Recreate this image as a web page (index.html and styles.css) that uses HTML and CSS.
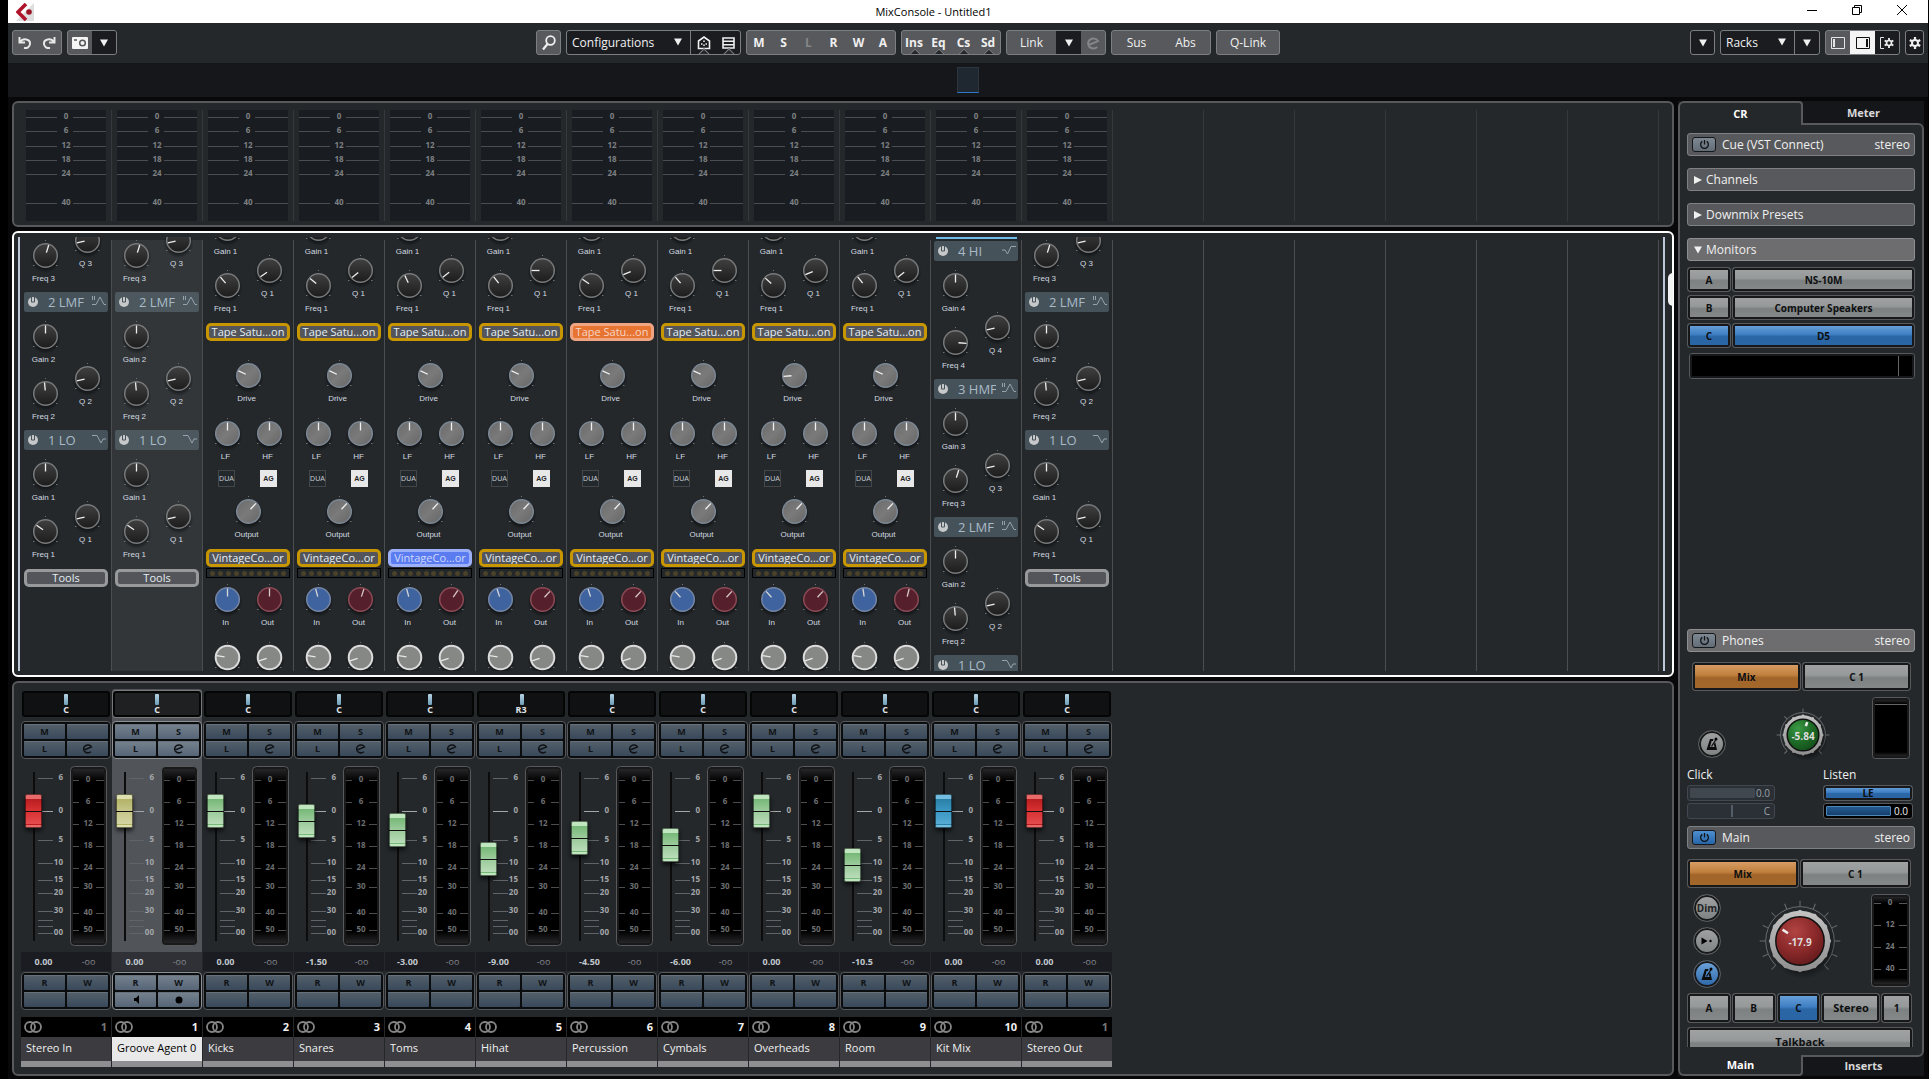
FILE: index.html
```html
<!DOCTYPE html>
<html lang="en">
<head>
<meta charset="utf-8">
<title>MixConsole - Untitled1</title>
<meta name="viewport" content="width=device-width, initial-scale=1">
<link rel="stylesheet" href="styles.css">
</head>
<body>
<svg class="defs" width="0" height="0" aria-hidden="true">
  <defs>
    <linearGradient id="g-dark" x1="0" y1="0" x2="0" y2="1"><stop offset="0" stop-color="#404040"/><stop offset="1" stop-color="#1c1c1c"/></linearGradient>
    <linearGradient id="g-gray" x1="0" y1="0" x2="1" y2="1"><stop offset="0" stop-color="#6a6a6a"/><stop offset="0.5" stop-color="#7a7a7a"/><stop offset="1" stop-color="#666"/></linearGradient>
    <radialGradient id="g-shadow"><stop offset="0.7" stop-color="#000" stop-opacity="0.45"/><stop offset="1" stop-color="#000" stop-opacity="0"/></radialGradient>
    <linearGradient id="g-meter" x1="0" y1="0" x2="0" y2="1"><stop offset="0" stop-color="#262628"/><stop offset="0.07" stop-color="#000"/><stop offset="0.93" stop-color="#000"/><stop offset="1" stop-color="#262628"/></linearGradient>
    <linearGradient id="g-rim" x1="0" y1="0" x2="0" y2="1"><stop offset="0" stop-color="#c4c4c4"/><stop offset="1" stop-color="#8d8d8d"/></linearGradient>
    <radialGradient id="g-green" cx="0.35" cy="0.3" r="0.8"><stop offset="0" stop-color="#3b9a45"/><stop offset="0.5" stop-color="#1f6d28"/><stop offset="1" stop-color="#124a19"/></radialGradient>
    <radialGradient id="g-red" cx="0.4" cy="0.3" r="0.8"><stop offset="0" stop-color="#b04442"/><stop offset="0.5" stop-color="#8d2a2b"/><stop offset="1" stop-color="#5c1719"/></radialGradient>
    <symbol id="i-down" viewBox="0 0 8 8"><path d="M0 0.5h8L4 7.5z" fill="currentColor"/></symbol>
    <symbol id="i-right" viewBox="0 0 8 8"><path d="M0 0v8L8 4z" fill="currentColor"/></symbol>
    <symbol id="i-e" viewBox="0 0 10 10"><path d="M1.4 6.6 8.6 3.6A3.8 3.6 0 1 0 8 7.9" fill="none" stroke="currentColor" stroke-width="1.4"/></symbol>
    <symbol id="i-power" viewBox="0 0 12 12"><path d="M3.6 2.6a4.2 4.2 0 1 0 4.8 0M6 1v5" fill="none" stroke="currentColor" stroke-width="1.4"/></symbol>
    <symbol id="i-on" viewBox="0 0 10 10"><circle cx="5" cy="5" r="5" fill="#c6c8c9"/><path d="M3.500 0v5h3V0" fill="none" stroke="#46525a" stroke-width="1"/></symbol>
    <symbol id="i-bell" viewBox="0 0 14 12"><path d="M0.5 0v4M2.5 0v4" stroke="#93a3ad"/><path d="M0 8.5h4L8 1l4 7.500h2" fill="none" stroke="#93a3ad"/></symbol>
    <symbol id="i-hi" viewBox="0 0 14 12"><path d="M0 5h3l2.500 4L9 1.500h5" fill="none" stroke="#93a3ad"/></symbol>
    <symbol id="i-lo" viewBox="0 0 14 12"><path d="M0 1.500h5L9 9l2-4h3" fill="none" stroke="#93a3ad"/></symbol>
    <symbol id="i-metro" viewBox="0 0 16 16"><path fill-rule="evenodd" d="M6 3h3.500l-.5 2H7.600L6 11h4.500L9.800 8l1.600-1.500L13 14H2.500z" fill="#0c0c0c"/><path d="M7.500 10.500 12 3.500" stroke="#0c0c0c" stroke-width="1.300"/><circle cx="12" cy="3" r="1.500"/></symbol>
    <symbol id="i-gear" viewBox="0 0 12 12"><circle cx="6" cy="6" r="3" fill="none" stroke="currentColor" stroke-width="2"/><path d="M6 0v2.500M6 9.500V12M0.800 3l2.200 1.300M9 7.700 11.200 9M0.800 9 3 7.700M9 4.300 11.200 3" stroke="currentColor" stroke-width="2.200"/></symbol>
    <symbol id="i-stereo" viewBox="0 0 18 12"><circle cx="6" cy="6" r="5" fill="none" stroke="#858585" stroke-width="1.800"/><circle cx="12" cy="6" r="5" fill="none" stroke="#858585" stroke-width="1.800"/></symbol>
  </defs>
</svg>

<header class="titlebar">
  <div class="app-icon"><svg width="18" height="18" viewBox="0 0 18 18"><path d="M0 18 18 0v18z" fill="#dedede"/><path d="M10 1 2 9l8 8" fill="none" stroke="#b0142a" stroke-width="3.600"/><circle cx="13" cy="9" r="2.800" fill="#9c1526"/></svg></div>
  <h1>MixConsole - Untitled1</h1>
  <div class="win-controls">
    <button aria-label="Minimize"><svg width="10" height="10"><path d="M0 5.500h10" stroke="#000"/></svg></button>
    <button aria-label="Restore"><svg width="10" height="10" fill="none" stroke="#000"><path d="M0.500 2.500h7v7h-7zM2.500 2.500v-2h7v7h-2"/></svg></button>
    <button aria-label="Close"><svg width="10" height="10" stroke="#000"><path d="M0 0l10 10M10 0 0 10"/></svg></button>
  </div>
</header>

<nav class="toolbar">
  <div class="tools">
    <div class="group">
      <button aria-label="Undo"><svg width="14" height="14" viewBox="0 0 14 14" fill="none" stroke="#e8e8e8" stroke-width="2"><path d="M1.500 1v5.500H7M2 6.200C5 1.500 12.500 3 12 8c-.3 3-3 4.500-6 4"/></svg></button>
      <button aria-label="Redo"><svg width="14" height="14" viewBox="0 0 14 14" fill="none" stroke="#e8e8e8" stroke-width="2"><path d="M12.500 1v5.500H7M12 6.200C9 1.500 1.500 3 2 8c.3 3 3 4.500 6 4"/></svg></button>
    </div>
    <div class="group">
      <button aria-label="Snapshot"><svg width="16" height="12" viewBox="0 0 16 12"><rect width="16" height="12" rx="1" fill="#f4f4f4"/><circle cx="10.500" cy="6" r="2.800" fill="none" stroke="#58595c" stroke-width="1.500"/><path d="M2 3h3" stroke="#58595c" stroke-width="1.500"/></svg></button>
      <button class="dark" aria-label="Snapshot menu"><svg class="arrow"><use href="#i-down"/></svg></button>
    </div>
  </div>

  <div class="tools tools-mid">
    <div class="group"><button aria-label="Find"><svg width="14" height="16" viewBox="0 0 14 16" fill="none" stroke="#f0f0f0"><circle cx="8.500" cy="5.500" r="4.300" stroke-width="1.800"/><path d="M5.500 9 1 14.500" stroke-width="2.200"/></svg></button></div>
    <div class="group dark">
      <span class="picker picker-config"><select aria-label="Configurations"><option>Configurations</option></select><svg class="arrow"><use href="#i-down"/></svg></span>
      <button class="notch" aria-label="Zones"><svg width="14" height="14" viewBox="0 0 14 14" fill="none" stroke="#f0f0f0" stroke-width="1.600"><path d="M1.500 5 7 1l5.500 4v7.500h-11z"/><path d="M7 4.500v1.500M7 8.500V10M4 8h1.500M8.500 8H10"/></svg></button>
      <button class="notch" aria-label="Racks list"><svg width="13" height="12" viewBox="0 0 13 12" fill="none" stroke="#f0f0f0" stroke-width="1.600"><path d="M1 1h11v10H1zM1 4.300h11M1 7.700h11"/></svg></button>
    </div>
    <div class="group bold">
      <button>M</button><button>S</button><button class="off">L</button><button>R</button><button>W</button><button>A</button>
    </div>
    <div class="group bold">
      <button class="notch">Ins</button><button class="notch">Eq</button><button class="notch">Cs</button><button class="notch">Sd</button>
    </div>
    <div class="group">
      <button class="wide">Link</button><button class="dark" aria-label="Link options"><svg class="arrow"><use href="#i-down"/></svg></button><button class="off" aria-label="Edit link"><svg width="14" height="14"><use href="#i-e"/></svg></button>
    </div>
    <div class="group"><button class="wide">Sus</button><button class="wide">Abs</button></div>
    <div class="group"><button class="qlink">Q-Link</button></div>
  </div>

  <div class="tools">
    <div class="group dark"><button aria-label="Zoom menu"><svg class="arrow"><use href="#i-down"/></svg></button></div>
    <div class="group dark">
      <span class="picker picker-racks"><select aria-label="Racks"><option>Racks</option></select><svg class="arrow"><use href="#i-down"/></svg></span>
      <button aria-label="Rack presets"><svg class="arrow"><use href="#i-down"/></svg></button>
    </div>
    <div class="group">
      <button aria-label="Left zone"><svg width="14" height="12" viewBox="0 0 14 12"><path d="M0.500 0.500h13v11H0.500z" fill="none" stroke="#e4e4e4"/><path d="M3 2v8" stroke="#e4e4e4" stroke-width="2"/></svg></button>
      <button class="lit" aria-label="Right zone"><svg width="14" height="12" viewBox="0 0 14 12"><path d="M0.500 0.500h13v11H0.500z" fill="none" stroke="#111"/><path d="M11 2v8" stroke="#111" stroke-width="2"/></svg></button>
      <button class="dark" aria-label="Window layout"><svg width="14" height="12" viewBox="0 0 14 12"><path d="M4 0.500H0.500v11H4" fill="none" stroke="#e4e4e4"/><svg x="4" y="1" width="10" height="10"><use href="#i-gear"/></svg></svg></button>
    </div>
    <div class="group dark"><button class="narrow" aria-label="Settings"><svg width="12" height="12"><use href="#i-gear"/></svg></button></div>
  </div>
</nav>

<div class="overview"><span class="overview-range"></span></div>

<main class="workspace">
  <div class="console">
    <section class="panel meters" id="meters" aria-label="Meter bridge"></section>
    <section class="panel rack" aria-label="Channel racks">
      <div class="rack-view" id="rack"></div>
      <span class="rack-handle"></span>
    </section>
    <section class="panel faders" id="faders" aria-label="Faders"></section>
  </div>

  <aside class="control-room">
    <div class="tabs tabs-top"><button class="tab active">CR</button><button class="tab">Meter</button></div>
    <div class="cr-body">
      <div class="bar"><button class="power" aria-label="Cue power"><svg width="11" height="11"><use href="#i-power"/></svg></button>Cue (VST Connect)<span class="mode">stereo</span></div>
      <button class="bar"><svg class="mark"><use href="#i-right"/></svg>Channels</button>
      <button class="bar"><svg class="mark"><use href="#i-right"/></svg>Downmix Presets</button>
      <button class="bar light"><svg class="mark"><use href="#i-down"/></svg>Monitors</button>
      <div class="monitors">
        <button class="key">A</button><button class="key name">NS-10M</button>
        <button class="key">B</button><button class="key name">Computer Speakers</button>
        <button class="key blue">C</button><button class="key name blue">D5</button>
      </div>
      <input class="gain" type="range" min="0" max="100" value="94" aria-label="Monitor gain">

      <div class="cr-lower">
        <div class="bar light"><button class="power" aria-label="Phones power"><svg width="11" height="11"><use href="#i-power"/></svg></button>Phones<span class="mode">stereo</span></div>
        <div class="source inset"><button class="key orange">Mix</button><button class="key">C 1</button></div>
        <div class="phones">
          <button class="round low" aria-label="Phones click"><svg width="16" height="16"><use href="#i-metro"/></svg></button>
          <svg class="dial" width="60" height="60" viewBox="-30 -30 60 60" id="phones-dial" role="img" aria-label="Phones level"></svg>
          <svg width="38" height="62" role="img" aria-label="Phones meter"><rect x="0.500" y="0.500" width="37" height="61" rx="3" fill="#191919" stroke="#57595c"/><rect x="3" y="3" width="32" height="56" fill="url(#g-meter)"/><path d="M3 7.500h32" stroke="#666"/></svg>
        </div>
        <div class="sends">
          <div class="send">
            <span>Click</span>
            <label class="slot-slider dim"><input type="range" value="76" aria-label="Click level"><output>0.0</output></label>
            <label class="slot-slider dim pan"><input type="range" value="50" aria-label="Click pan"><output>C</output></label>
          </div>
          <div class="send">
            <span>Listen</span>
            <button class="key blue">LE</button>
            <label class="slot-slider"><input type="range" value="76" aria-label="Listen level"><output>0.0</output></label>
          </div>
        </div>
        <div class="bar"><button class="power on" aria-label="Main power"><svg width="11" height="11"><use href="#i-power"/></svg></button>Main<span class="mode">stereo</span></div>
        <div class="source"><button class="key orange">Mix</button><button class="key">C 1</button></div>
        <div class="main-out">
          <div class="rounds">
            <button class="round">Dim</button>
            <button class="round" aria-label="Reference level"><svg width="12" height="8"><path d="M0.500 0.500v7L6.500 4z"/><circle cx="9.500" cy="4" r="1.200"/></svg></button>
            <button class="round blue" aria-label="Main click"><svg width="16" height="16"><use href="#i-metro"/></svg></button>
          </div>
          <svg class="dial" width="90" height="90" viewBox="-45 -45 90 90" id="main-dial" role="img" aria-label="Main level"></svg>
          <svg width="39" height="93" class="scale" id="main-meter" role="img" aria-label="Main meter"></svg>
        </div>
        <div class="select-row"><button class="key">A</button><button class="key">B</button><button class="key blue">C</button><button class="key stereo">Stereo</button><button class="key one">1</button></div>
        <div class="talk"><button class="key big">Talkback</button></div>
      </div>
    </div>
    <div class="tabs tabs-bottom"><button class="tab active">Main</button><button class="tab">Inserts</button></div>
  </aside>
</main>
<script src="app.js"></script>
</body>
</html>
```
FILE: styles.css
```css
* { box-sizing: border-box; }

body {
  margin: 0;
  height: 100vh;
  padding: 0 1px 0 8px;
  display: flex;
  flex-direction: column;
  overflow: hidden;
  background: #000;
  color: #f0f0f0;
  font: 12px/16px "Open Sans", "Noto Sans", sans-serif;
}

button, select, input { font: inherit; color: inherit; margin: 0; }
button { padding: 0; border: 0; background: none; display: flex; align-items: center; justify-content: center; white-space: nowrap; }
svg { display: block; flex: none; }
.defs { position: absolute; }

/* Title bar */
.titlebar { height: 23px; display: flex; align-items: center; background: #fff; color: #000; flex: none; }
.app-icon { width: 70px; padding-left: 8px; }
.titlebar h1 { flex: 1; margin: 0; font-size: 11px; font-weight: 400; text-align: center; }
.win-controls { display: flex; padding-right: 4px; }
.win-controls button { width: 45px; height: 23px; padding-bottom: 3px; }

/* Toolbar */
.toolbar { height: 40px; flex: none; display: flex; justify-content: space-between; align-items: center; padding: 0 4px 1px; background: #24282b; }
.tools { display: flex; gap: 5px; }
.tools-mid { margin-left: 9px; }
.group { display: flex; height: 25px; border: 1px solid #7c7e81; border-radius: 3px; background: #58595c; overflow: hidden; }
.group button { width: 25px; height: 23px; position: relative; }
.group button:first-child, .group button:last-child { width: 24px; }
.group button:only-child { width: 23px; }
.group .dark, .group.dark { background: #1b1c20; }
.group .lit { background: #f4f4f4; }
.group .off { color: #85868a; }
.group .wide { width: 50px; }
.group .wide:first-child, .group .wide:last-child { width: 49px; }
.group .qlink.qlink { width: 62px; }
.group .narrow.narrow { width: 17px; }
.group.bold { font-weight: 700; }
.notch::after { content: ""; position: absolute; left: 9px; bottom: -4px; width: 6px; height: 6px; background: #24282b; border: 1px solid #7c7e81; rotate: 45deg; }
.arrow { width: 8px; height: 8px; }
.picker { position: relative; display: flex; border-right: 1px solid #7c7e81; }
.picker select { width: 100%; border: 0; padding: 0 5px; background: none; appearance: none; }
.picker .arrow { position: absolute; right: 8px; top: 7px; pointer-events: none; }
.picker-config { width: 124px; }
.picker-racks { width: 74px; }

.overview { height: 34px; flex: none; display: flex; justify-content: center; padding: 4px 0; background: #15171b; }
.overview-range { width: 22px; background: #1f2730; border: 1px solid #2b3640; border-bottom-color: #2f78c4; }

/* Workspace */
.workspace { flex: 1; min-height: 0; display: flex; gap: 4px; padding: 4px 4px 3px; background: #08080a; }
.console { flex: 1; min-width: 0; display: flex; flex-direction: column; gap: 4px; }
.panel { display: flex; border: 2px solid #57595c; border-radius: 6px; background: #24282b; overflow: hidden; }
.col { width: 91px; flex: none; }

.meters { height: 126px; flex: none; padding: 7px 7px 4px; }
.meters .col { border-right: 1px solid #35393c; padding-left: 5px; }
.scale { font: 700 8px/10px "Open Sans", sans-serif; text-anchor: middle; }

/* Racks */
.rack { flex: 1; min-height: 0; position: relative; border-color: #fff; overflow: visible; }
.rack-view { flex: 1; min-width: 0; display: flex; margin: 4px 7px 4px 4px; padding-left: 1px; border: solid #bcc8da; border-width: 0 2px; overflow: hidden; }
.rack-handle { position: absolute; right: -1px; top: 40px; width: 5px; height: 33px; border-radius: 5px 0 0 5px; background: #f2f2f2; }
.rack .col { padding: 0 3px; background: linear-gradient(#4b4e51, #4b4e51) right 3px / 1px 100% no-repeat; }
.rack .col.selected { background: linear-gradient(to right, #323639 90px, #4b4e51 90px) 0 3px no-repeat; }
.from-band3 .stack { margin-top: -83px; }
.from-band1 .stack { margin-top: -53px; }
.stack { width: 84px; }
.accent { height: 2px; margin: 0 2px 2px; background: #6fbbe8; }

.band-head { display: flex; align-items: center; width: 84px; height: 20px; padding: 0 2px 0 4px; border-radius: 2px; background: #46525a; color: #a9bac6; font-size: 13px; }
.selected .band-head { background: #4c585e; }
.band-head span { width: 38px; margin-left: 10px; margin-right: auto; text-align: left; overflow: hidden; }
.band { display: grid; grid-template-columns: 42px 42px; padding-top: 4px; }
.band-q { padding-top: 42px; }
.unit { height: 57px; width: 42px; font: 8px/12px "Liberation Sans", Arial, sans-serif; color: #d3dae0; text-align: center; }
.unit span { display: block; padding-right: 3px; white-space: nowrap; }
.row { display: flex; justify-content: center; }
.slot { width: 84px; height: 18px; margin-top: 1px; border: 3px solid #c89600; border-radius: 5px; background: #53555b; color: #e4edf3; font-size: 11px; overflow: hidden; }
.slot.tools-slot { border-color: #97999b; }
.slot.hot { border-color: #f0a582; background: #e87432; color: #f6d5c5; }
.slot.cool { border-color: #9cb0fa; background: #5b7cf0; color: #cfdafc; }
.drive { margin-top: 14px; margin-bottom: 1px; }
.switches { height: 21px; display: flex; }
.switches button { width: 17px; height: 17px; margin: 0 13px 0 12px; border: 1px solid #44474a; background: #23282c; color: #c3cbd2; font: 7px/8px "Liberation Sans", Arial, sans-serif; }
.switches button + button { background: #e8e8e8; border-color: #e8e8e8; color: #222; font-weight: 700; }
.leds { display: flex; align-items: center; justify-content: space-around; width: 84px; height: 10px; margin: 1px 0; padding: 0 2px; border: 1px solid #000; }
.leds i { width: 5px; height: 5px; border-radius: 50%; background: #494129; }
.in-out { margin-bottom: 1px; }

/* Faders */
.faders { flex: none; height: 395px; padding: 6px 7px; }
.strip { width: 90px; margin-right: 1px; flex: none; display: flex; flex-direction: column; }
.strip-top { padding-top: 2px; border-radius: 3px 3px 0 0; height: 263px; }
.selected .strip-top { background: #515459; }
.pan-box { width: 88px; height: 26px; margin: 0 1px 4px; border: 2px solid #040505; border-radius: 3px; background: #0f1112; font: 700 9px/10px "Open Sans", sans-serif; text-align: center; }
.selected .pan-box { background: #1e2022; box-shadow: 0 0 0 1px #76787c; }
.pan-box input { display: block; width: 100%; height: 12px; appearance: none; background: none; }
.pan-box input::-webkit-slider-thumb { appearance: none; width: 4px; height: 11px; border-radius: 1px; background: linear-gradient(#b7d3e3, #6c9db8); }
.pan-box output { display: block; color: #e0e4e6; }

.pads { display: grid; grid-template: 1fr 1fr / 1fr 1fr; gap: 2px; height: 38px; padding: 2px; border: 1px solid #57595c; border-radius: 4px; background: #0b0c0e; }
.pads button { min-height: 0; border-radius: 1px; background: linear-gradient(#54606b, #39495a); box-shadow: inset 0 1px #66717b; color: #101316; font: 700 9px/12px "Open Sans", sans-serif; }
.selected .pads { border-color: #8d9094; }
.selected .pads button { background: linear-gradient(#76828e, #566577); }
.pads.auto { margin-top: 1px; }

.fader-area { display: flex; padding-top: 7px; }
.fader { width: 17px; height: 169px; margin: 6px 0 0 4px; writing-mode: vertical-lr; direction: rtl; appearance: none; position: relative; background: linear-gradient(#0c0c0d, #0c0c0d) center / 2px 100% no-repeat; }
.fader::-webkit-slider-thumb { appearance: none; width: 17px; height: 34px; border: 1px solid #0008; border-radius: 2px; box-shadow: 0 3px 4px #000a;
  background: linear-gradient(var(--edge) 4px, var(--deep) 4px, var(--mid) 16px, #111 16px, #111 17px, var(--mid) 17px, var(--low) 29px, var(--deep) 29px, var(--deep) 30px, var(--edge) 30px); }
.red { --edge: #e86a6a; --deep: #b81d1f; --mid: #d93234; --low: #e34c4e; }
.sand { --edge: #dedfae; --deep: #b2b267; --mid: #c6c68a; --low: #d4d4a4; }
.green { --edge: #c0e6bf; --deep: #76b877; --mid: #9ccb9c; --low: #b9dcb8; }
.azure { --edge: #73bde0; --deep: #2a7fa5; --mid: #3b98c5; --low: #56abd2; }
.fader-scale { margin: 6px 0 0 -4px; text-anchor: end; }
.strip-meter { margin-left: 5px; }

.levels { display: grid; grid-template-columns: 1fr 1fr; height: 19px; padding-top: 2px; background: #1b1c21; font-size: 9px; font-weight: 700; color: #c0c8ce; text-align: center; }
.levels span { color: #83878c; font-weight: 400; }
.selected .levels { background: #2f3136; }
.ident { display: flex; justify-content: space-between; align-items: center; height: 20px; margin-top: 7px; padding: 0 4px 0 3px; background: #000; font-size: 11px; font-weight: 700; }
.ident.io { color: #777; }
.title { height: 30px; padding: 3px 5px; border-bottom: 6px solid #8f8f91; background: #3c3c40; font-size: 11px; white-space: nowrap; overflow: hidden; }
.title span { display: block; overflow: hidden; }
.selected .title { background: #e9e9e9; color: #000; }

/* Control room */
.control-room { width: 246px; flex: none; display: flex; flex-direction: column; background: #15161a; }
.tabs { display: flex; position: relative; }
.tab { flex: 1; font-size: 11px; font-weight: 700; border: 2px solid transparent; color: #d8d8d8; }
.tab.active { flex: 0 0 125px; border-color: #57595c; background: #24282b; color: #fff; }
.tabs-top { height: 24px; margin-bottom: -2px; z-index: 1; }
.tabs-top .active { border-bottom: 0; border-radius: 6px 4px 0 0; }
.tabs-bottom { height: 21px; margin-top: -2px; }
.tabs-bottom .active { border-top: 0; border-radius: 0 0 4px 6px; }
.cr-body { flex: 1; min-height: 0; display: flex; flex-direction: column; padding: 8px 7px; border: 2px solid #57595c; border-radius: 0 6px 6px 0; background: #24282b; }
.bar { display: flex; flex: none; align-items: center; justify-content: flex-start; width: 100%; height: 23px; margin-bottom: 12px; padding: 0 4px; border: 1px solid #7e8083; border-radius: 3px; background: #58595c; }
.bar.light { background: #6d6d6f; border-color: #8e8f91; }
.mode { margin-left: auto; }
.mark { width: 8px; height: 8px; margin: 0 4px 0 2px; }
.power { width: 24px; height: 15px; margin-right: 6px; border: 1px solid #15181b; border-radius: 3px; background: linear-gradient(#7e8892, #626d78); color: #101214; }
.power.on { background: linear-gradient(#4d8fd0, #2765a8); }
.key { flex: 1; min-width: 0; height: 25px; border: 1px solid #57595c; border-radius: 3px; background: linear-gradient(#a1a3a4, #96999a 45%, #7d8182 55%, #868a8b); box-shadow: inset 0 0 0 2px #17181a; color: #0d0f10; font-size: 10px; font-weight: 700; }
.key.blue { background: linear-gradient(#6fa5dc, #3f80c4 45%, #2a65a6 55%, #2a65a6); }
.key.orange { background: linear-gradient(#dba26c, #c07f3d 45%, #a1652a 55%, #a5682b); }
.monitors { display: grid; grid-template-columns: 44px 1fr; gap: 3px 1px; margin: -6px 0 5px; }
.gain { display: block; width: 226px; height: 26px; flex: none; margin-left: 2px; padding: 0 2px; appearance: none; border: 1px solid #57595c; border-radius: 3px; background: #000; box-shadow: inset 0 0 0 2px #17181a; }
.gain::-webkit-slider-thumb { appearance: none; width: 1px; height: 20px; background: #666; }

.cr-lower { margin-top: auto; height: 418px; flex: none; display: flex; flex-direction: column; overflow: hidden; }
.cr-lower > * { flex: none; }
.cr-lower .bar { margin-bottom: 10px; }
.source { display: flex; gap: 1px; width: 224px; }
.source.inset { padding-left: 5px; }
.source .key { height: 29px; }
.phones { display: flex; justify-content: space-between; width: 223px; height: 74px; padding: 6px 0 0 11px; }
.phones .low { margin-top: 33px; }
.phones .dial { margin: 8px 0 0 7px; }
.round { width: 28px; height: 28px; border: 1px solid #57595c; border-radius: 50%; background: linear-gradient(#a1a3a4, #7d8182); box-shadow: inset 0 0 0 2px #17181a; color: #222; font-size: 10px; font-weight: 700; }
.round.blue { background: linear-gradient(#6fa5dc, #2a65a6); }
.dial text { fill: #ddd; font: 700 10px "Open Sans", sans-serif; text-anchor: middle; dominant-baseline: central; }
.sends { display: flex; gap: 46px; margin-bottom: 7px; padding-top: 2px; }
.send { width: 90px; display: grid; gap: 2px; }
.send .key, .slot-slider { width: 100%; height: 16px; }
.send > span { line-height: 16px; }
.slot-slider { position: relative; display: flex; justify-content: flex-end; align-items: center; padding-right: 4px; border: 1px solid #57595c; border-radius: 3px; background: #000; font-size: 10px; }
.slot-slider input { position: absolute; left: 2px; top: 2px; width: 65px; height: 10px; appearance: none; border: 1px solid #4f86b8; border-radius: 1px; background: linear-gradient(#235a90, #163f6b); }
.slot-slider input::-webkit-slider-thumb { appearance: none; width: 1px; height: 1px; }
.slot-slider.dim { width: 88px; background: #2b3036; border-color: #41484f; color: #9aa2a8; }
.slot-slider.dim input { background: #40474f; border-color: #40474f; }
.slot-slider.pan input { width: 84px; background: none; border: 0; }
.slot-slider.pan input::-webkit-slider-thumb { width: 2px; height: 12px; background: #555d66; }
.main-out { display: flex; justify-content: space-between; width: 223px; height: 105px; padding: 6px 0 0 6px; }
.main-out .dial { margin: 2px 0 0 7px; }
.rounds { display: flex; flex-direction: column; gap: 5px; }
.select-row { display: flex; gap: 1px; width: 225px; margin-bottom: 4px; }
.select-row .key { height: 30px; flex: 44; }
.select-row .stereo { flex: 60; font-size: 11px; }
.select-row .one { flex: 30; }
.talk { width: 226px; display: flex; }
.big { height: 30px; font-size: 11px; }
```
FILE: app.js
```javascript
const channels = [
  { name: "Stereo In", num: 1, io: true, color: "red", pos: 113, level: "0.00", rack: "io", noSolo: true },
  { name: "Groove Agent 01", num: 1, selected: true, color: "sand", pos: 113, level: "0.00", rack: "io", monitor: true },
  { name: "Kicks", num: 2, color: "green", pos: 113, level: "0.00", freq: -40, q: -125, drive: -65, input: 0, out: 0 },
  { name: "Snares", num: 3, color: "green", pos: 103, level: "-1.50", freq: -50, q: -130, drive: -65, input: -15, out: 18 },
  { name: "Toms", num: 4, color: "green", pos: 94, level: "-3.00", freq: -25, q: -128, drive: -65, input: -15, out: 35, comp: "cool" },
  { name: "Hihat", num: 5, color: "green", pos: 65, level: "-9.00", freq: -38, q: -90, drive: -65, input: -18, out: 42, pan: "R3" },
  { name: "Percussion", num: 6, color: "green", pos: 86, level: "-4.50", freq: -55, q: -112, drive: -65, input: -18, out: 42, tape: "hot" },
  { name: "Cymbals", num: 7, color: "green", pos: 79, level: "-6.00", freq: -40, q: -90, drive: -65, input: -42, out: 42 },
  { name: "Overheads", num: 8, color: "green", pos: 113, level: "0.00", freq: -48, q: -112, drive: -95, input: -42, out: 42 },
  { name: "Room", num: 9, color: "green", pos: 59, level: "-10.5", freq: -38, q: -128, drive: -65, input: -8, out: 14 },
  { name: "Kit Mix", num: 10, color: "azure", pos: 113, level: "0.00", rack: "group" },
  { name: "Stereo Out", num: 1, io: true, color: "red", pos: 113, level: "0.00", rack: "io" }
];
const emptyColumns = 6;

const knobStyles = {
  dark: ["url(#g-dark)", "#77797a", "#f0f0f0"],
  gray: ["url(#g-gray)", "#7b8794", "#f0f0f0"],
  blue: ["#3f639f", "#7486a6", "#d8d8d8"],
  wine: ["#55202b", "#8c4a56", "#d8c8c8"],
  pale: ["#868886", "#dcdcdc", "#e8e8e8"]
};

function knob(label, angle, style = "dark") {
  const [fill, ring, hand] = knobStyles[style];
  return `<div class="unit"><svg width="42" height="38" viewBox="0 0 42 38" role="img" aria-label="${label || "Knob"}">
    <circle cx="21.500" cy="23" r="15" fill="url(#g-shadow)"/>
    <circle cx="21.500" cy="20.500" r="11.800" fill="${fill}" stroke="${ring}" stroke-width="${style === "pale" ? 2 : 1.5}"/>
    <path d="M21 5.500h1M9 30.500h1.500M32 30.500h1.500" stroke="#707274"/>
    <path d="M21.500 9.500v8" stroke="${hand}" stroke-width="1.300" transform="rotate(${angle} 21.500 20.500)"/>
  </svg><span>${label}</span></div>`;
}

function band(n, title, icon, freq, q) {
  return `<button class="band-head"><svg width="10" height="10"><use href="#i-on"/></svg><span>${n} ${title}</span><svg width="14" height="12"><use href="#i-${icon}"/></svg></button>
    <div class="band"><div>${knob("Gain " + n, 0)}${knob("Freq " + n, freq)}</div><div class="band-q">${knob("Q " + n, q)}</div></div>`;
}

function rackColumn(c) {
  const sel = c.selected ? " selected" : "";
  const lower = band(2, "LMF", "bell", -5, -103) + band(1, "LO", "lo", -55, -103);
  if (c.rack === "io") {
    return `<div class="col from-band3${sel}"><div class="stack">${band(3, "HMF", "bell", 17, -103)}${lower}<button class="slot tools-slot">Tools</button></div></div>`;
  }
  if (c.rack === "group") {
    return `<div class="col"><div class="accent"></div><div class="stack">${band(4, "HI", "hi", 95, -103)}${band(3, "HMF", "bell", 17, -103)}${lower}</div></div>`;
  }
  return `<div class="col from-band1"><div class="stack">
    ${band(1, "LO", "lo", c.freq, c.q)}
    <button class="slot ${c.tape || ""}">Tape Satu...on</button>
    <div class="row drive">${knob("Drive", c.drive, "gray")}</div>
    <div class="row">${knob("LF", 0, "gray")}${knob("HF", 0, "gray")}</div>
    <div class="switches"><button>DUA</button><button>AG</button></div>
    <div class="row">${knob("Output", 42, "gray")}</div>
    <button class="slot ${c.comp || ""}">VintageCo...or</button>
    <div class="leds">${"<i></i>".repeat(10)}</div>
    <div class="row in-out">${knob("In", c.input, "blue")}${knob("Out", c.out, "wine")}</div>
    <div class="row">${knob("", -80, "pale")}${knob("", -108, "pale")}</div>
  </div></div>`;
}

function bridgeMeter() {
  const marks = [[0, 7], [6, 21], [12, 36], [18, 50], [24, 64], [40, 93]];
  return `<svg class="scale" width="80" height="111" fill="#7d8083"><rect width="80" height="111" fill="#191c21"/>${marks.map(([t, y]) =>
    `<path d="M0 ${y + 0.5}h31M47 ${y + 0.5}h33" stroke="#4a4d52"/><text x="40" y="${y + 2}">${t}</text>`).join("")}</svg>`;
}

function stripMeter() {
  const marks = [[0, 14], [6, 36], [12, 58], [18, 80], [24, 102], [30, 121], [40, 147], [50, 164]];
  return `<svg class="scale strip-meter" width="37" height="180" fill="#6c6e70">
    <rect x="0.500" y="0.500" width="36" height="179" rx="4" fill="#191919" stroke="#57595c"/><rect x="3" y="3" width="31" height="174" fill="url(#g-meter)"/>
    ${marks.map(([t, y]) => `<path d="M3 ${y + 0.5}h6M26 ${y + 0.5}h8" stroke="#4a4c4e"/><text x="18" y="${y + 2}">${t}</text>`).join("")}</svg>`;
}

function faderScale() {
  const marks = [[6, 6], [0, 39], [5, 68], [10, 91], [15, 108], [20, 121], [30, 139], ["", 148], ["", 154], ["00", 161]];
  return `<svg class="scale fader-scale" width="27" height="169" fill="#a4a7aa">${marks.map(([t, y]) =>
    `<path d="M0 ${y + 0.5}h15" stroke="${t === 0 ? "#a4a7aa" : "#606468"}"/>${t === "" ? "" : `<text x="25" y="${y + 2}">${t}</text>`}`).join("")}</svg>`;
}

function strip(c) {
  const e = `<svg width="11" height="11"><use href="#i-e"/></svg>`;
  return `<div class="strip${c.selected ? " selected" : ""}">
    <div class="strip-top">
      <div class="pan-box"><input type="range" min="-100" max="100" value="${c.pan ? 3 : 0}" aria-label="${c.name} pan"><output>${c.pan || "C"}</output></div>
      <div class="pads"><button>M</button><button>${c.noSolo ? "" : "S"}</button><button>L</button><button aria-label="Edit">${e}</button></div>
      <div class="fader-area">
        <input class="fader ${c.color}" type="range" min="0" max="135" value="${c.pos}" aria-label="${c.name} level">
        ${faderScale()}${stripMeter()}
      </div>
    </div>
    <div class="levels">${c.level}<span>-oo</span></div>
    <div class="pads auto"><button>R</button><button>W</button>
      <button aria-label="Monitor">${c.monitor ? '<svg width="8" height="9"><path d="M2 3h2l3-3v9L4 6H2z"/></svg>' : ""}</button>
      <button aria-label="Record">${c.monitor ? '<svg width="8" height="8"><circle cx="4" cy="4" r="3.500"/></svg>' : ""}</button></div>
    <div class="ident${c.io ? " io" : ""}"><svg width="18" height="12"><use href="#i-stereo"/></svg>${c.num}</div>
    <div class="title"><span>${c.name}</span></div>
  </div>`;
}

function dial(r, fill, text, angle, step) {
  let ticks = "";
  for (let a = -135; a <= 135; a += step) {
    ticks += `<path d="M0 ${-r * 1.32}V${-r * 1.55}" stroke="#6a6c6e" transform="rotate(${a})"/>`;
  }
  let rim = "";
  for (let a = 0; a < 360; a += 5) {
    const rad = a * Math.PI / 180, rr = r * 1.17 + (a % 30 === 0 ? 0.8 : -0.2);
    rim += `${a ? "L" : "M"}${(rr * Math.sin(rad)).toFixed(1)} ${(-rr * Math.cos(rad)).toFixed(1)}`;
  }
  const k = r * 1.32 * Math.SQRT1_2;
  return `${ticks}<path d="M${-k} ${k}A${r * 1.32} ${r * 1.32} 0 1 1 ${k} ${k}" fill="none" stroke="#6a6c6e"/>
    <circle cx="3" cy="4" r="${r * 1.3}" fill="url(#g-shadow)"/>
    <path d="${rim}z" fill="url(#g-rim)"/>
    <circle r="${r * 0.93}" fill="${fill}" stroke="#111" stroke-width="1.500"/>
    <path d="M0 ${-r * 0.8}v${r * 0.25}" stroke="#eee" stroke-width="2.500" transform="rotate(${angle})"/>
    <text y="1">${text}</text>`;
}

const empty = n => '<div class="col"></div>'.repeat(n);
document.getElementById("meters").innerHTML = channels.map(() => `<div class="col">${bridgeMeter()}</div>`).join("") + empty(emptyColumns);
document.getElementById("rack").innerHTML = channels.map(rackColumn).join("") + empty(emptyColumns);
document.getElementById("faders").innerHTML = channels.map(strip).join("");
document.getElementById("phones-dial").innerHTML = dial(17, "url(#g-green)", "-5.84", 18, 45);
document.getElementById("main-dial").innerHTML = dial(26, "url(#g-red)", "-17.9", -57, 22.5);
document.getElementById("main-meter").innerHTML = `<rect x="0.500" y="0.500" width="38" height="92" rx="3" fill="#191919" stroke="#57595c"/><rect x="3" y="3" width="33" height="87" fill="url(#g-meter)"/>` +
  [[0, 9], [12, 31], [24, 53], [40, 75]].map(([t, y]) => `<path d="M3 ${y + 0.5}h7M28 ${y + 0.5}h8" stroke="#55575a"/><text x="19" y="${y + 2}" fill="#77797b">${t}</text>`).join("");
```
